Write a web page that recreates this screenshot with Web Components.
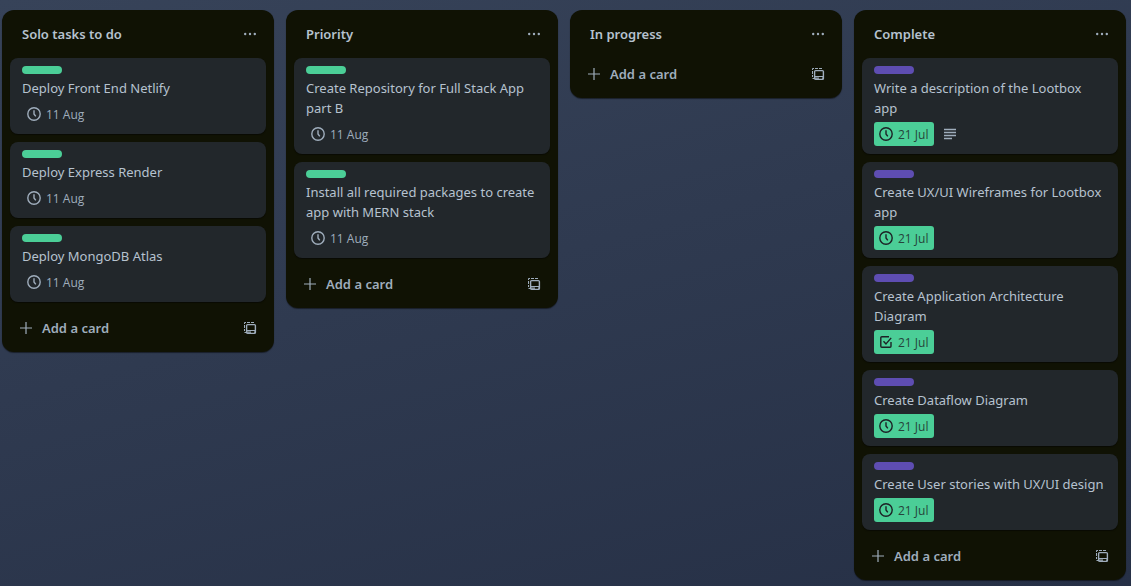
<!DOCTYPE html>
<html lang="en">
<head>
<meta charset="utf-8">
<meta name="viewport" content="width=device-width, initial-scale=1">
<title>Board</title>
<style>
  html { height: 100%; }
  body {
    margin: 0;
    min-height: 100%;
    background: linear-gradient(165deg, #374359 0%, #2f3a50 45%, #263046 100%);
    color: #b6c2cf;
    font-family: "Noto Sans", "Open Sans", sans-serif;
    font-size: 13px;
    line-height: 20px;
  }
</style>
</head>
<body>
<board-lists>
  <board-list name="Solo tasks to do">
    <board-card due="11 Aug">Deploy Front End Netlify</board-card>
    <board-card due="11 Aug">Deploy Express Render</board-card>
    <board-card due="11 Aug">Deploy MongoDB Atlas</board-card>
  </board-list>
  <board-list name="Priority">
    <board-card due="11 Aug">Create Repository for Full Stack App part B</board-card>
    <board-card due="11 Aug">Install all required packages to create app with MERN stack</board-card>
  </board-list>
  <board-list name="In progress"></board-list>
  <board-list name="Complete">
    <board-card label="purple" due="21 Jul" done described>Write a description of the Lootbox app</board-card>
    <board-card label="purple" due="21 Jul" done>Create UX/UI Wireframes for Lootbox app</board-card>
    <board-card label="purple" due="21 Jul" done icon="check">Create Application Architecture Diagram</board-card>
    <board-card label="purple" due="21 Jul" done>Create Dataflow Diagram</board-card>
    <board-card label="purple" due="21 Jul" done>Create User stories with UX/UI design</board-card>
  </board-list>
</board-lists>

<script>
const ICONS = {
  clock: '<circle cx="8" cy="8" r="6.2"/><path d="M8 4.2V8l1.8 2.4"/>',
  check: '<path d="M13 8v4.2a1 1 0 0 1-1 1H3.8a1 1 0 0 1-1-1V3.8a1 1 0 0 1 1-1H11"/><path d="M5.5 7.3 8 9.9l5.2-6"/>',
  text: '<path d="M2 3.5h12M2 6.5h12M2 9.5h12M2 12.5h8" stroke-width="1.3"/>',
  plus: '<path d="M8 2v12M2 8h12" stroke-width="1.2"/>',
  more: '<g fill="currentColor" stroke="none"><circle cx="3.2" cy="8" r="1.2"/><circle cx="8" cy="8" r="1.2"/><circle cx="12.8" cy="8" r="1.2"/></g>',
  template: '<path d="M2.5 4V2.5H4M5 2.5h3M9 2.5h3M2.5 5v3M2.5 9v2M2.5 12.5H4" stroke-width="1"/><rect x="4.6" y="4.6" width="8.8" height="8.8" rx="1"/><path d="M4 10.5h10M4 12.2h5M12 12.2h2" stroke-width="1.2"/>'
};

class BoardIcon extends HTMLElement {
  connectedCallback() {
    if (this.shadowRoot) return;
    this.attachShadow({ mode: 'open' }).innerHTML = `
      <style>
        :host { display: block; flex: none; width: 16px; height: 16px; }
        svg { display: block; width: 100%; height: 100%; }
      </style>
      <svg viewBox="0 0 16 16" fill="none" stroke="currentColor" stroke-width="1.4" stroke-linejoin="round" aria-hidden="true">${ICONS[this.getAttribute('name')]}</svg>`;
  }
}

class BoardCard extends HTMLElement {
  connectedCallback() {
    if (this.shadowRoot) return;
    const icon = this.getAttribute('icon') || 'clock';
    this.attachShadow({ mode: 'open' }).innerHTML = `
      <style>
        :host {
          display: block;
          padding: 8px 12px;
          border-radius: 8px;
          background: #22272b;
          box-shadow: 0 1px 1px #03040480;
        }
        .label { width: 40px; height: 8px; border-radius: 4px; background: #4bce97; }
        :host([label="purple"]) .label { background: #5e4db2; }
        .title { margin: 4px 0; }
        .badges { display: flex; align-items: center; gap: 8px; color: #9fadbc; }
        .due {
          display: flex;
          align-items: center;
          gap: 4px;
          height: 24px;
          padding: 0 6px 0 4px;
          border-radius: 3px;
          font-family: "Open Sans", "Noto Sans", sans-serif;
          font-size: 12px;
        }
        .due span { line-height: 22px; padding-top: 2px; }
        :host([done]) .due { background: #4bce97; color: #1d2125; }
        :host([done]) .due span { opacity: .8; }
      </style>
      <div class="label"></div>
      <div class="title"><slot></slot></div>
      <div class="badges">
        <div class="due"><board-icon name="${icon}"></board-icon><span>${this.getAttribute('due')}</span></div>
        ${this.hasAttribute('described') ? '<board-icon name="text"></board-icon>' : ''}
      </div>`;
  }
}

class BoardList extends HTMLElement {
  connectedCallback() {
    if (this.shadowRoot) return;
    this.attachShadow({ mode: 'open' }).innerHTML = `
      <style>
        :host {
          display: block;
          box-sizing: border-box;
          flex: none;
          width: 272px;
          padding: 0 8px 8px;
          border-radius: 12px;
          background: #101204;
          box-shadow: 0 1px 1px #03040480;
        }
        header, footer { display: flex; align-items: center; justify-content: space-between; }
        header { height: 48px; padding-left: 12px; }
        h2 { margin: 0; font-size: 13px; line-height: 20px; font-weight: 600; }
        button {
          display: flex;
          align-items: center;
          gap: 8px;
          height: 32px;
          padding: 0 8px;
          border: 0;
          border-radius: 8px;
          background: none;
          color: #9fadbc;
          font: inherit;
          font-weight: 600;
          cursor: pointer;
        }
        button:hover { background: #a6c5e229; }
        ::slotted(board-card) { margin-bottom: 8px; }
        ::slotted(board-card:last-child) { margin-bottom: 10px; }
      </style>
      <header>
        <h2>${this.getAttribute('name')}</h2>
        <button type="button" aria-label="List actions"><board-icon name="more"></board-icon></button>
      </header>
      <slot></slot>
      <footer>
        <button type="button"><board-icon name="plus"></board-icon>Add a card</button>
        <button type="button" aria-label="Create from template"><board-icon name="template"></board-icon></button>
      </footer>`;
  }
}

class BoardLists extends HTMLElement {
  connectedCallback() {
    if (this.shadowRoot) return;
    this.attachShadow({ mode: 'open' }).innerHTML = `
      <style>
        :host {
          display: flex;
          align-items: flex-start;
          gap: 12px;
          padding: 10px 2px 6px;
          overflow-x: auto;
        }
      </style>
      <slot></slot>`;
  }
}

customElements.define('board-icon', BoardIcon);
customElements.define('board-card', BoardCard);
customElements.define('board-list', BoardList);
customElements.define('board-lists', BoardLists);
</script>
</body>
</html>
